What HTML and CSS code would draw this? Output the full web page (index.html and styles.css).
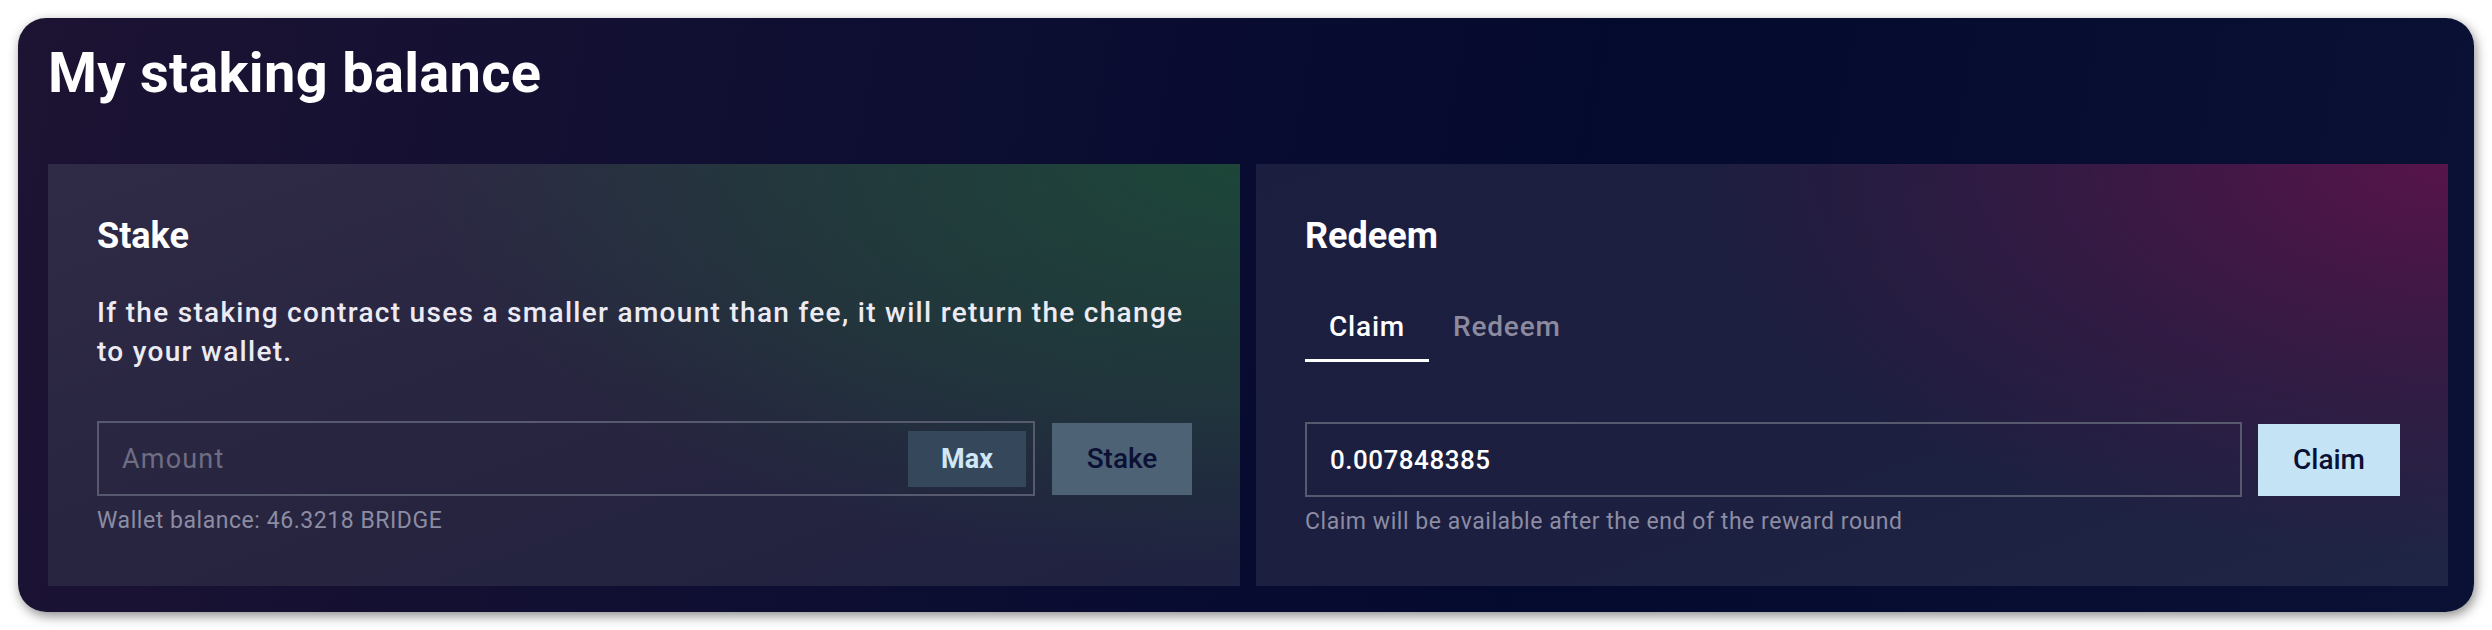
FILE: index.html
```html
<!DOCTYPE html>
<html lang="en">
<head>
<meta charset="utf-8">
<title>My staking balance</title>
<link rel="stylesheet" href="styles.css">
</head>
<body>
<section class="card">
  <h1 class="title">My staking balance</h1>
  <div class="panels">
    <div class="panel panel-stake">
      <h2 class="panel-title">Stake</h2>
      <p class="panel-text">If the staking contract uses a smaller amount than fee, it will return the change to your wallet.</p>
      <div class="field-row">
        <div class="field">
          <input class="field-input" type="text" placeholder="Amount">
          <button class="btn-max" type="button">Max</button>
        </div>
        <button class="btn btn-stake" type="button">Stake</button>
      </div>
      <div class="hint">Wallet balance: 46.3218 BRIDGE</div>
    </div>
    <div class="panel panel-redeem">
      <h2 class="panel-title">Redeem</h2>
      <div class="tabs">
        <div class="tab tab-active">Claim</div>
        <div class="tab">Redeem</div>
      </div>
      <div class="field-row field-row-claim">
        <div class="field">
          <input class="field-input field-value" type="text" value="0.007848385" readonly>
        </div>
        <button class="btn btn-claim" type="button">Claim</button>
      </div>
      <div class="hint">Claim will be available after the end of the reward round</div>
    </div>
  </div>
</section>
</body>
</html>
```
FILE: styles.css
```css
* { box-sizing: border-box; }

html, body {
  margin: 0;
  padding: 0;
  background: #ffffff;
}

body {
  padding: 18px;
  font-family: Roboto, "Liberation Sans", sans-serif;
}

.card {
  height: 594px;
  border-radius: 28px;
  padding: 23px 26px 26px 30px;
  background: linear-gradient(100deg, #1d1333 0%, #0d0e32 35%, #040a2e 62%, #0b1134 100%);
  box-shadow: 2px 4px 12px rgba(0, 0, 0, 0.45);
  display: flex;
  flex-direction: column;
}

.title {
  margin: 0;
  font-size: 56px;
  line-height: 64px;
  font-weight: 700;
  letter-spacing: 0.3px;
  color: #ffffff;
}

.panels {
  margin-top: 59px;
  display: grid;
  grid-template-columns: 1fr 1fr;
  gap: 16px;
  height: 422px;
}

.panel {
  padding: 50px 48px 0 49px;
}

.panel-stake {
  background:
    radial-gradient(ellipse 85% 120% at 100% 0%, rgba(28, 72, 56, 0.95) 0%, rgba(28, 72, 56, 0.5) 45%, rgba(28, 72, 56, 0) 80%),
    linear-gradient(160deg, #2f2b46 0%, #27243f 55%, #1f2241 100%);
}

.panel-redeem {
  background:
    radial-gradient(ellipse 75% 110% at 100% 0%, rgba(88, 20, 74, 0.98) 0%, rgba(70, 22, 70, 0.55) 45%, rgba(50, 25, 70, 0) 85%),
    linear-gradient(160deg, #1b1e3f 0%, #1c1f40 55%, #1f2545 100%);
}

.panel-title {
  margin: 0;
  font-size: 36px;
  line-height: 44px;
  font-weight: 700;
  color: #ffffff;
}

.panel-text {
  margin: 35px 0 0;
  max-width: 1094px;
  font-size: 28px;
  line-height: 39px;
  font-weight: 500;
  letter-spacing: 1.3px;
  color: #ecebf3;
}

.field-row {
  margin-top: 50px;
  display: flex;
  align-items: center;
  gap: 17px;
}

.field {
  flex: 1;
  height: 75px;
  border: 2px solid #575a6e;
  display: flex;
  align-items: center;
  padding: 0 7px 0 23px;
}

.field-input {
  flex: 1;
  min-width: 0;
  border: 0;
  outline: none;
  background: transparent;
  font-family: Roboto, "Liberation Sans", sans-serif;
  font-size: 27px;
  font-weight: 400;
  letter-spacing: 0.6px;
  color: #ffffff;
  padding: 0;
}

.field-input::placeholder {
  color: #6e6d83;
  letter-spacing: 1.2px;
}

.field-value {
  font-weight: 500;
  font-size: 26px;
  letter-spacing: 0.5px;
}

.btn-max {
  width: 118px;
  height: 56px;
  border: 0;
  background: #35475a;
  color: #cfe7f7;
  font-family: Roboto, "Liberation Sans", sans-serif;
  font-size: 27px;
  font-weight: 700;
  padding: 0;
}

.btn {
  width: 140px;
  height: 72px;
  border: 0;
  padding: 0;
  font-family: Roboto, "Liberation Sans", sans-serif;
  font-size: 28px;
  font-weight: 500;
  color: #0b1035;
}

.btn-stake {
  background: #4e6275;
}

.btn-claim {
  width: 142px;
  background: #c4e3f5;
}

.hint {
  margin-top: 10px;
  font-size: 23px;
  line-height: 30px;
  letter-spacing: 0.55px;
  color: #8c8ca3;
}

.tabs {
  margin-top: 49px;
  display: flex;
}

.tab {
  padding: 0 24px 13px;
  font-size: 28px;
  line-height: 39px;
  font-weight: 500;
  letter-spacing: 0.8px;
  color: #8b8a9f;
  border-bottom: 3px solid transparent;
}

.tab-active {
  color: #ffffff;
  border-bottom-color: #ffffff;
}

.field-row-claim {
  margin-top: 60px;
  gap: 16px;
}
```
